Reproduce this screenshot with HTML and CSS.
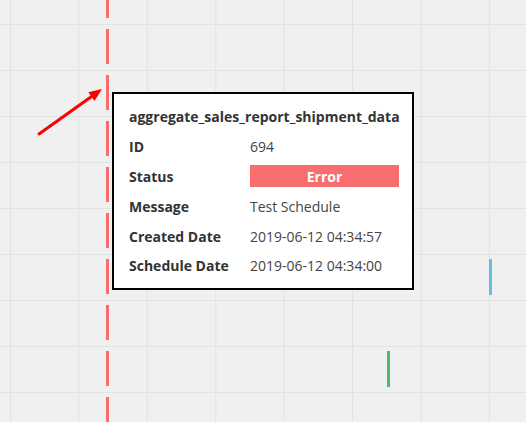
FILE: index.html
```html
<!DOCTYPE html>
<html>
<head>
<meta charset="utf-8">
<link rel="stylesheet" href="styles.css">
</head>
<body>
<div class="canvas">
  <div class="now-line"></div>
  <div class="bar bar-blue"></div>
  <div class="bar bar-green"></div>
  <svg class="arrow" width="526" height="422" viewBox="0 0 526 422">
    <line x1="39" y1="134" x2="93" y2="95.5" stroke="#ff0000" stroke-width="3" stroke-linecap="round"/>
    <polygon points="102,89 88.3,92.3 94.5,100.9" fill="#ff0000"/>
  </svg>
  <div class="tooltip">
    <div class="tt-title">aggregate_sales_report_shipment_data</div>
    <div class="tt-row"><span class="tt-label">ID</span><span class="tt-value">694</span></div>
    <div class="tt-row"><span class="tt-label">Status</span><span class="tt-badge">Error</span></div>
    <div class="tt-row"><span class="tt-label">Message</span><span class="tt-value">Test Schedule</span></div>
    <div class="tt-row"><span class="tt-label">Created Date</span><span class="tt-value">2019-06-12 04:34:57</span></div>
    <div class="tt-row"><span class="tt-label">Schedule Date</span><span class="tt-value">2019-06-12 04:34:00</span></div>
  </div>
</div>
</body>
</html>
```
FILE: styles.css
```css
html, body {
  margin: 0;
  padding: 0;
}
body {
  font-family: "Open Sans", "Liberation Sans", sans-serif;
  color: #333;
}
.canvas {
  position: relative;
  width: 526px;
  height: 422px;
  overflow: hidden;
  background-color: #f0f0f0;
  background-image:
    linear-gradient(to right, #e2e2e2 1px, transparent 1px),
    linear-gradient(to bottom, #e2e2e2 1px, transparent 1px);
  background-size: 68.43px 46px;
  background-position: 10px 24px;
}
.now-line {
  position: absolute;
  left: 106px;
  top: 0;
  width: 3px;
  height: 422px;
  background-image: linear-gradient(to bottom, transparent 11px, #fb6d6d 11px);
  background-size: 3px 46px;
  background-position: 0 18px;
}
.bar {
  position: absolute;
  width: 3px;
  height: 36px;
}
.bar-blue {
  left: 489px;
  top: 259px;
  background: #62c1e2;
}
.bar-green {
  left: 387px;
  top: 351px;
  background: #4dba6d;
}
.arrow {
  position: absolute;
  left: 0;
  top: 0;
}
.tooltip {
  position: absolute;
  left: 112px;
  top: 92px;
  width: 268px;
  height: 194px;
  box-sizing: border-box;
  width: 302px;
  height: 198px;
  padding: 8px 15px 0 15px;
  background: #fff;
  border: 2px solid #000;
  display: flex;
  flex-direction: column;
  font-size: 14px;
}
.tt-title {
  height: 29.8px;
  flex: none;
  display: flex;
  align-items: center;
  font-weight: 700;
  color: #333;
}
.tt-row {
  height: 29.8px;
  flex: none;
  display: grid;
  grid-template-columns: 121px 149px;
  align-items: center;
}
.tt-label {
  font-weight: 700;
  color: #333;
}
.tt-value {
  color: #444;
}
.tt-badge {
  height: 22px;
  background: #f86d6d;
  color: #fff;
  font-weight: 700;
  display: flex;
  align-items: center;
  justify-content: center;
}
```
